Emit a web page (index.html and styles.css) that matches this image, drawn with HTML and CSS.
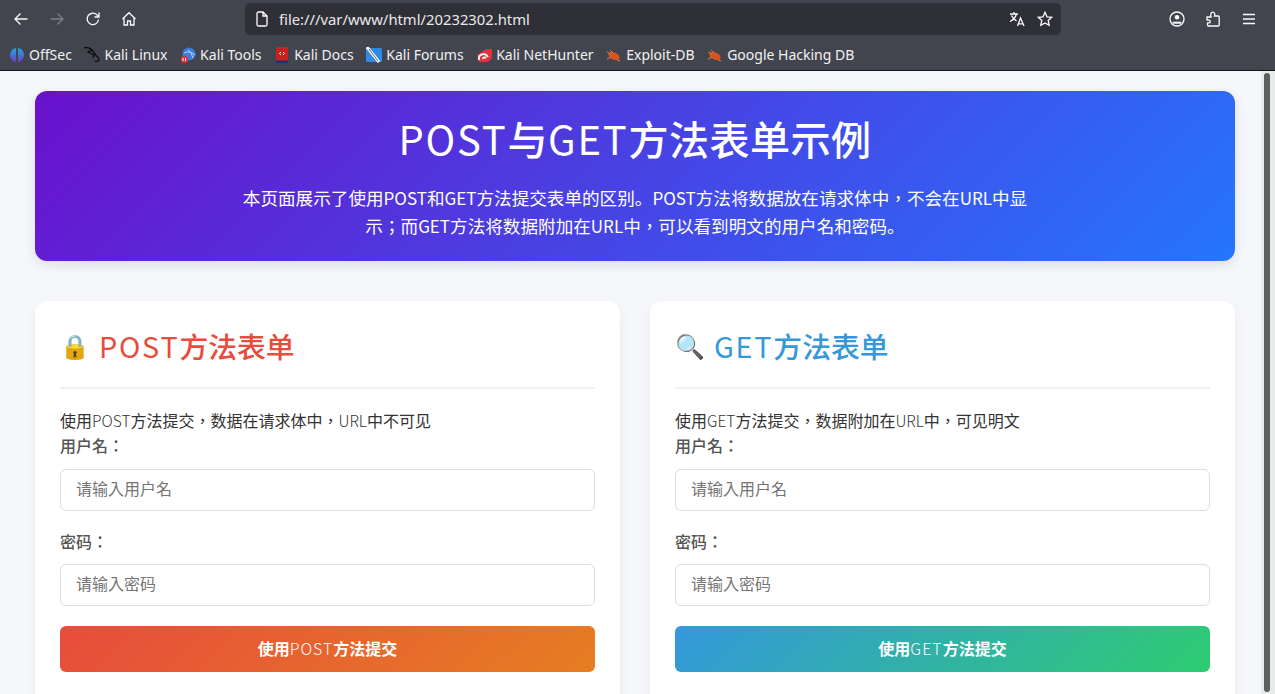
FILE: index.html
```html
<!DOCTYPE html>
<html lang="zh-Hant">
<head>
<meta charset="utf-8">
<title>POST与GET方法表单示例</title>
<link rel="stylesheet" href="styles.css">
</head>
<body>
<div class="browser">
  <div class="toolbar">
    <div class="nav">
      <svg class="tb-icon" viewBox="0 0 16 16"><path d="M14.500 8H2M7.500 2.500 2 8l5.500 5.500"/></svg>
      <svg class="tb-icon dim" viewBox="0 0 16 16"><path d="M1.500 8H14M8.500 2.500 14 8l-5.500 5.500"/></svg>
      <svg class="tb-icon" viewBox="0 0 16 16"><path d="M13.500 8.500A5.700 5.700 0 1 1 11.800 3.800L14 6M14 1.500V6H9.500"/></svg>
      <svg class="tb-icon" viewBox="0 0 16 16"><path d="M1.500 8 8 1.700 14.500 8M3 6.800V14h3.500v-4h3v4H13V6.800"/></svg>
    </div>
    <div class="urlbar">
      <svg class="tb-icon" viewBox="0 0 16 16"><path d="M3 2.500A1.500 1.500 0 0 1 4.500 1H9l4 4v8.500a1.500 1.500 0 0 1-1.500 1.500h-7A1.500 1.500 0 0 1 3 13.500zM9 1v4h4"/></svg>
      <span class="url">file:///var/www/html/20232302.html</span>
      <svg class="tb-icon trans" viewBox="0 0 16 16"><path d="M1 3h8M5 1v2M7.500 3C6.500 6.500 4 9 1 10.500M2.500 4.500C3.500 7 5.500 8.800 7.500 9.800M8.500 15l3-8 3.500 8M9.500 12.800h4.800"/></svg>
      <svg class="tb-icon star" viewBox="0 0 16 16"><path d="M8 1.300l2 4.500 4.800.5-3.600 3.200 1 4.800L8 12l-4.200 2.300 1-4.800L1.200 6.300 6 5.800z"/></svg>
    </div>
    <div class="tools">
      <svg class="tb-icon" viewBox="0 0 16 16"><circle cx="8" cy="8" r="7"/><circle cx="8" cy="6.300" r="2.300" class="solid"/><path d="M3.800 11.700h8.400" class="thick"/></svg>
      <svg class="tb-icon" viewBox="0 0 16 16"><path d="M2 6h4C5.300 3.800 5.800 1.200 7.800 1.200S10.300 3.800 9.500 5h3.700a1 1 0 0 1 1 1v8a1 1 0 0 1-1 1H3.500a1 1 0 0 1-1-1v-2l2.500-.3c1-2-1-3.200-3-2.700z"/></svg>
      <svg class="tb-icon" viewBox="0 0 16 16"><path d="M2 3.500h12M2 8h12M2 12.500h12"/></svg>
    </div>
  </div>
  <div class="bookmarks">
    <span class="bm"><svg class="fav" viewBox="0 0 16 16"><defs><linearGradient id="off" x1="0" y1="0" x2="0" y2="1"><stop offset="0" stop-color="#1fa8d8"/><stop offset="1" stop-color="#6a3fd0"/></linearGradient></defs><path d="M7 1C3 2 1 5 1 8s2 6 6 7z" fill="url(#off)"/><path d="M9 1c4 1 6 4 6 7s-2 6-6 7z" fill="url(#off)"/></svg>OffSec</span>
    <span class="bm"><svg class="fav" viewBox="0 0 16 16"><path d="M0 1c3-1 6 0 8 2l3 4c1 2 4 3 4 6-1 1-3 2-4 1M8 3 4 5l6 3-1 3" fill="none" stroke="#0b0b0b" stroke-width="1.300"/></svg>Kali Linux</span>
    <span class="bm"><svg class="fav" viewBox="0 0 16 16"><circle cx="9" cy="7" r="6.500" fill="#3a7fe0"/><path d="M4 6c4-2 7-1 11 2M8 3c3 2 4 5 5 8" fill="none" stroke="#dfeaf8" stroke-width=".8"/><rect x="1" y="9" width="7" height="7" rx="3" fill="#d9333f"/><path d="M3 11v3M5.500 11v3" stroke="#fff"/></svg>Kali Tools</span>
    <span class="bm"><svg class="fav" viewBox="0 0 16 16"><rect x="2" y="0" width="12" height="15" fill="#c8211f"/><rect x="2" y="13.500" width="12" height="2.500" fill="#24306a"/><path d="M7 5 5.500 6.500 7 8M9 5l1.500 1.500L9 8" fill="none" stroke="#fff"/></svg>Kali Docs</span>
    <span class="bm"><svg class="fav" viewBox="0 0 16 16"><rect x="0" y="1" width="16" height="14" rx="1.500" fill="#2d8be8"/><path d="M1 0l12 15" stroke="#fff" stroke-width="3"/><path d="M3 2l9 12" stroke="#333" stroke-width=".8"/></svg>Kali Forums</span>
    <span class="bm"><svg class="fav" viewBox="0 0 16 16"><path d="M1 8 10 2h6v9l-4 4H3z" fill="#e0313c"/><path d="M3 13c-1-6 6-8 9-3M7 12c0-2 2-2 3-1" fill="none" stroke="#fff" stroke-width="1.800"/></svg>Kali NetHunter</span>
    <span class="bm"><svg class="fav" viewBox="0 0 16 16"><ellipse cx="8" cy="9" rx="6" ry="3.500" transform="rotate(25 8 9)" fill="#d9531e"/><path d="M1 5l4 2M4 3l3 3M1 12l4-2M11 13l3 1" stroke="#e8794a"/></svg>Exploit-DB</span>
    <span class="bm"><svg class="fav" viewBox="0 0 16 16"><ellipse cx="8" cy="9" rx="6" ry="3.500" transform="rotate(25 8 9)" fill="#d9531e"/><path d="M1 5l4 2M4 3l3 3M1 12l4-2M11 13l3 1" stroke="#e8794a"/></svg>Google Hacking DB</span>
  </div>
  <div class="viewport">
    <main class="content">
      <header class="hero">
        <h1><span class="lat">POST</span>与<span class="lat">GET</span>方法表单示例</h1>
        <p>本页面展示了使用<span class="tight">POST</span>和<span class="tight">GET</span>方法提交表单的区别<span lang="zh-Hans">。</span><span class="tight">POST</span>方法将数据放在请求体中，不会在<span class="tight">URL</span>中显示；而<span class="tight">GET</span>方法将数据附加在<span class="tight">URL</span>中，可以看到明文的用户名和密码<span lang="zh-Hans">。</span></p>
      </header>
      <div class="cards">
        <section class="card">
          <h2 class="title post"><span class="emoji">🔒</span><span><span class="lat">POST</span>方法表单</span></h2>
          <p class="desc">使用<span class="thin">POST</span>方法提交，数据在请求体中，<span class="thin">URL</span>中不可见</p>
          <label class="label">用户名：</label>
          <input class="field" type="text" placeholder="请输入用户名">
          <label class="label second">密码：</label>
          <input class="field" type="password" placeholder="请输入密码">
          <button class="submit post-btn">使用<span class="btn-lat">POST</span>方法提交</button>
        </section>
        <section class="card">
          <h2 class="title get"><span class="emoji">🔍</span><span><span class="lat">GET</span>方法表单</span></h2>
          <p class="desc">使用<span class="thin">GET</span>方法提交，数据附加在<span class="thin">URL</span>中，可见明文</p>
          <label class="label">用户名：</label>
          <input class="field" type="text" placeholder="请输入用户名">
          <label class="label second">密码：</label>
          <input class="field" type="password" placeholder="请输入密码">
          <button class="submit get-btn">使用<span class="btn-lat">GET</span>方法提交</button>
        </section>
      </div>
    </main>
    <div class="scrollbar"><div class="thumb"></div></div>
  </div>
</div>
</body>
</html>
```
FILE: styles.css
```css
* { box-sizing: border-box; }
html, body { margin: 0; height: 100%; overflow: hidden; }
body { font-family: "Noto Sans CJK TC", "Noto Sans", sans-serif; }
.browser { display: flex; flex-direction: column; height: 694px; }
.toolbar {
  height: 36px; background: #42454e; display: flex; align-items: flex-start; flex: none;
}
.tb-icon { width: 16px; height: 16px; fill: none; stroke: #fbfbfe; stroke-width: 1.300; flex: none; }
.tb-icon.dim { stroke: #7c7f86; }
.tb-icon .solid { fill: #fbfbfe; stroke: none; }
.tb-icon .thick { stroke-width: 2; }
.nav { display: flex; gap: 20px; padding: 11px 0 0 13px; width: 245px; flex: none; }
.urlbar {
  width: 816px; height: 32px; margin-top: 3px; background: #2f3037; border-radius: 5px;
  display: flex; align-items: center; padding: 0 8px 0 9px; flex: none;
}
.url { font: 14.800px/1 "Noto Sans", sans-serif; color: #e8e8ea; margin-left: 9px; flex: 1; }
.trans { margin-right: 12px; }
.tools { display: flex; gap: 20px; padding: 11px 0 0 108px; }
.bookmarks {
  height: 35px; background: #42454e; border-bottom: 1px solid #14151a; display: flex; align-items: center;
  gap: 12.600px; padding: 4px 0 0 9px; flex: none;
  font: 14px/1 "Noto Sans", sans-serif; color: #f1f1f3;
}
.bm { display: flex; align-items: center; gap: 4px; white-space: nowrap; }
.fav { width: 16px; height: 16px; flex: none; }
.viewport { flex: 1; display: flex; overflow: hidden; background: #f5f7fa; min-height: 0; }
.content { flex: 1; min-width: 0; padding: 20px 26px 0 35px; }
.scrollbar { width: 14px; flex: none; background: #e9eaec; padding: 2px 0 0 3px; }
.thumb { height: 619px; background: #5b5f5e; border-radius: 4px; width: 6px; }
.hero {
  height: 170px; border-radius: 12px; color: #fff; text-align: center; padding-top: 18px;
  background: linear-gradient(135deg, #6a11cb, #2575fc);
  box-shadow: 0 4px 12px rgba(0,0,0,.1);
}
.hero h1 { margin: 0 0 17px; font-size: 40px; line-height: 58px; font-weight: 500; letter-spacing: .5px; }
.lat { font-weight: 400; letter-spacing: 1.800px; }
.thin { font-weight: 300; font-size: 15.500px; }
.tight { font-size: 17px; }
.btn-lat { font-weight: 300; letter-spacing: 1px; }
.hero p { margin: 0 auto; width: 800px; font-size: 17.600px; line-height: 28px; }
.cards { display: grid; grid-template-columns: 1fr 1fr; gap: 30px; margin-top: 40px; }
.card {
  background: #fff; border-radius: 12px; padding: 25px; height: 420px;
  box-shadow: 0 4px 12px rgba(0,0,0,.05); display: flex; flex-direction: column;
}
.title {
  margin: 0 0 19px; height: 63px; padding-bottom: 22px; border-bottom: 2px solid #f0f0f0; flex: none;
  font-size: 28.800px; line-height: 39px; font-weight: 500; display: flex; align-items: center;
}
.emoji { margin: 3px 9px 0 0; font-size: 24px; font-weight: 400; font-family: "Noto Color Emoji", sans-serif; }
.post { color: #e74c3c; }
.get { color: #3498db; }
.desc { margin: 0; font-size: 16px; line-height: 25px; color: #333; }
.label { font-size: 16px; line-height: 25px; font-weight: 500; color: #555; margin-bottom: 11px; }
.label.second { margin-top: 18px; margin-bottom: 10px; }
.field {
  width: 100%; height: 42px; border: 1px solid #ddd; border-radius: 6px; padding: 0 15px 5px; flex: none;
  font: 16px "Noto Sans CJK TC", sans-serif; background: #fff;
}
.field::placeholder { color: #757575; }
.submit {
  margin-top: 20px; height: 46px; border: 0; border-radius: 6px; color: #fff; flex: none; padding-bottom: 3px;
  font: 700 16px "Noto Sans CJK TC", sans-serif;
}
.post-btn { background: linear-gradient(135deg, #e74c3c, #e67e22); }
.get-btn { background: linear-gradient(135deg, #3498db, #2ecc71); }
```
